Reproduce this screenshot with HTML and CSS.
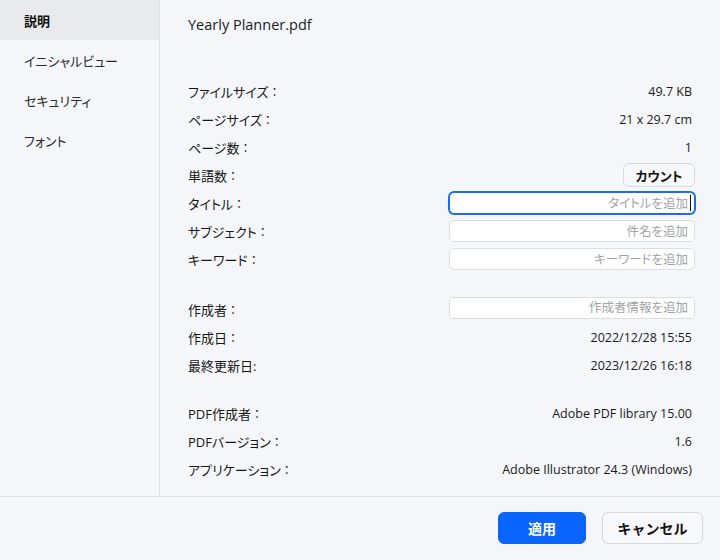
FILE: index.html
```html
<!DOCTYPE html>
<html lang="ja">
<head>
<meta charset="utf-8">
<title>文書のプロパティ</title>
<link rel="stylesheet" href="styles.css">
</head>
<body>
<div class="dialog">
  <div class="body">
    <nav class="sidebar">
      <div class="nav-item active">説明</div>
      <div class="nav-item">イニシャルビュー</div>
      <div class="nav-item">セキュリティ</div>
      <div class="nav-item">フォント</div>
    </nav>
    <main class="main">
      <h1 class="title">Yearly Planner.pdf</h1>
      <div class="group">
        <div class="row"><span class="label">ファイルサイズ<span class="colon">：</span></span><span class="value">49.7 KB</span></div>
        <div class="row"><span class="label">ページサイズ<span class="colon">：</span></span><span class="value">21 x 29.7 cm</span></div>
        <div class="row"><span class="label">ページ数<span class="colon">：</span></span><span class="value">1</span></div>
        <div class="row"><span class="label">単語数<span class="colon">：</span></span><button class="btn-count">カウント</button></div>
        <div class="row"><span class="label">タイトル<span class="colon">：</span></span><span class="field focused"><input class="input" placeholder="タイトルを追加"></span></div>
        <div class="row"><span class="label">サブジェクト<span class="colon">：</span></span><span class="field"><input class="input" placeholder="件名を追加"></span></div>
        <div class="row"><span class="label">キーワード<span class="colon">：</span></span><span class="field"><input class="input" placeholder="キーワードを追加"></span></div>
      </div>
      <div class="group group-2">
        <div class="row"><span class="label">作成者<span class="colon">：</span></span><span class="field field-up"><input class="input" placeholder="作成者情報を追加"></span></div>
        <div class="row"><span class="label">作成日<span class="colon">：</span></span><span class="value">2022/12/28 15:55</span></div>
        <div class="row"><span class="label">最終更新日:</span><span class="value">2023/12/26 16:18</span></div>
      </div>
      <div class="group group-3">
        <div class="row"><span class="label">PDF作成者<span class="colon">：</span></span><span class="value">Adobe PDF library 15.00</span></div>
        <div class="row"><span class="label">PDFバージョン<span class="colon">：</span></span><span class="value">1.6</span></div>
        <div class="row"><span class="label">アプリケーション<span class="colon">：</span></span><span class="value">Adobe Illustrator 24.3 (Windows)</span></div>
      </div>
    </main>
  </div>
  <footer class="footer">
    <button class="btn btn-primary">適用</button>
    <button class="btn btn-secondary">キャンセル</button>
  </footer>
</div>
</body>
</html>
```
FILE: styles.css
```css
* { box-sizing: border-box; }
html, body { margin: 0; padding: 0; }
body {
  width: 720px;
  height: 560px;
  background: #f5f6fa;
  color: #1b1b1b;
  font-family: "Open Sans", "Noto Sans CJK JP", sans-serif;
  font-size: 12.5px;
  overflow: hidden;
}
.dialog {
  display: flex;
  flex-direction: column;
  height: 560px;
}
.body {
  display: flex;
  height: 496px;
}
.sidebar {
  width: 160px;
  flex: none;
  border-right: 1px solid #dfe0e4;
}
.nav-item {
  height: 40px;
  display: flex;
  align-items: center;
  padding-left: 24px;
  font-size: 13px;
  color: #2a2a2a;
  font-feature-settings: "palt";
}
.nav-item.active {
  background: #e8eaee;
  color: #111;
  font-weight: 600;
}
.main {
  flex: 1;
  padding: 14px 25px 0 28px;
}
.title {
  margin: 0 0 41px;
  font-size: 14.5px;
  font-weight: 400;
  line-height: 22px;
  color: #1b1b1b;
}
.group-2 { margin-top: 22px; }
.group-3 { margin-top: 20px; }
.row {
  height: 28px;
  display: flex;
  align-items: center;
  justify-content: space-between;
}
.label {
  font-size: 13px;
  color: #161616;
  font-feature-settings: "palt";
}
.colon {
  font-feature-settings: normal;
  font-size: 12px;
}
.value {
  padding-right: 3px;
}
.btn-count {
  width: 72px;
  height: 24px;
  border: 1px solid #d8d9dd;
  border-radius: 6px;
  background: #f7f8fa;
  font-family: inherit;
  font-size: 13px;
  font-weight: 700;
  color: #111;
  padding: 0;
  font-feature-settings: "palt";
}
.field {
  position: relative;
  display: block;
  width: 246px;
  height: 22px;
}
.field-up {
  margin-top: -3px;
}
.input {
  display: block;
  width: 100%;
  height: 22px;
  margin: 0;
  border: 1px solid #dcdde1;
  border-radius: 5px;
  background: #fff;
  text-align: right;
  padding: 0 6px 0 6px;
  font-family: inherit;
  font-size: 12.5px;
  color: #1b1b1b;
  outline: none;
}
.input::placeholder {
  color: #a3a3a3;
  font-feature-settings: "palt";
}
.field.focused .input {
  border-color: #1a6cf2;
  box-shadow: 0 0 0 1px #1a6cf2;
}
.field.focused::after {
  content: "";
  position: absolute;
  right: 4px;
  top: 3px;
  width: 1px;
  height: 16px;
  background: #111;
}
.footer {
  flex: 1;
  border-top: 1px solid #dfe0e4;
  display: flex;
  justify-content: flex-end;
  align-items: flex-start;
  gap: 16px;
  padding: 15px 17px 0 0;
}
.btn {
  height: 32px;
  border-radius: 6px;
  font-family: inherit;
  font-size: 14px;
  font-weight: 700;
  padding: 0;
}
.btn-primary {
  width: 88px;
  background: #0a66ff;
  border: 1px solid #0a66ff;
  color: #fff;
}
.btn-secondary {
  width: 101px;
  background: #f7f8fb;
  border: 1px solid #d6d8dc;
  color: #111;
}
```
